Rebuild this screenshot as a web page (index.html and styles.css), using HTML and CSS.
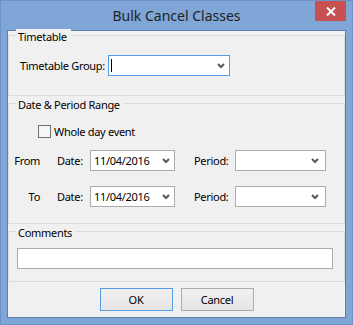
FILE: index.html
```html
<!DOCTYPE html>
<html>
<head>
<meta charset="utf-8">
<link rel="stylesheet" href="styles.css">
</head>
<body>
<div class="window">
  <div class="titlebar">
    <div class="title">Bulk Cancel Classes</div>
    <div class="close"><svg width="10" height="9" viewBox="0 0 10 9"><path d="M1 0.5 L9 8.5 M9 0.5 L1 8.5" stroke="#fff" stroke-width="2" fill="none"/></svg></div>
  </div>
  <div class="client">
    <div class="group g-timetable">
      <div class="legend">Timetable</div>
      <div class="row tt-row">
        <span class="tt-lbl">Timetable Group:</span>
        <div class="combo focus tt-combo"><span class="caret"></span><svg class="chev" width="8" height="6" viewBox="0 0 8 6"><path d="M1 1 L4 4 L7 1" stroke="#5a5a5a" stroke-width="2" fill="none"/></svg></div>
      </div>
    </div>
    <div class="group g-date">
      <div class="legend">Date &amp; Period Range</div>
      <div class="row chk-row"><span class="checkbox"></span><span class="chk-text">Whole day event</span></div>
      <div class="row range-row from-row">
        <span class="rlabel">From</span>
        <span class="dlabel">Date:</span>
        <div class="combo date-combo"><span class="val">11/04/2016</span><svg class="chev" width="8" height="6" viewBox="0 0 8 6"><path d="M1 1 L4 4 L7 1" stroke="#5a5a5a" stroke-width="2" fill="none"/></svg></div>
        <span class="plabel">Period:</span>
        <div class="combo period-combo"><span class="val"></span><svg class="chev" width="8" height="6" viewBox="0 0 8 6"><path d="M1 1 L4 4 L7 1" stroke="#5a5a5a" stroke-width="2" fill="none"/></svg></div>
      </div>
      <div class="row range-row to-row">
        <span class="rlabel">To</span>
        <span class="dlabel">Date:</span>
        <div class="combo date-combo"><span class="val">11/04/2016</span><svg class="chev" width="8" height="6" viewBox="0 0 8 6"><path d="M1 1 L4 4 L7 1" stroke="#5a5a5a" stroke-width="2" fill="none"/></svg></div>
        <span class="plabel">Period:</span>
        <div class="combo period-combo"><span class="val"></span><svg class="chev" width="8" height="6" viewBox="0 0 8 6"><path d="M1 1 L4 4 L7 1" stroke="#5a5a5a" stroke-width="2" fill="none"/></svg></div>
      </div>
    </div>
    <div class="group g-comments">
      <div class="legend">Comments</div>
      <div class="textbox"></div>
    </div>
    <div class="buttons">
      <div class="btn default">OK</div>
      <div class="btn">Cancel</div>
    </div>
  </div>
</div>
</body>
</html>
```
FILE: styles.css
```css
* { box-sizing: border-box; }
html, body { margin: 0; padding: 0; background: #7fa6d6; }
body {
  font-family: "Noto Sans", "Open Sans", sans-serif;
  font-size: 11px;
  letter-spacing: -0.3px;
  color: #000;
}
.window {
  width: 353px;
  height: 325px;
  background: #7fa6d6;
  border: 1px solid #6d93c6;
  display: flex;
  flex-direction: column;
}
.titlebar {
  height: 29px;
  flex: none;
  display: grid;
  grid-template-columns: 1fr auto 1fr;
  align-items: start;
}
.title {
  grid-column: 2;
  font-size: 14px;
  letter-spacing: 0;
  line-height: 20px;
  padding-top: 5px;
  color: #222;
  white-space: nowrap;
}
.close {
  grid-column: 3;
  justify-self: end;
  margin-right: 6px;
  width: 31px;
  height: 20px;
  background: #c75050;
  display: flex;
  align-items: center;
  justify-content: center;
}
.close svg { display: block; }
.client {
  flex: none;
  margin: 0 6px;
  height: 288px;
  border: 1px solid #5c7fb0;
  background: #f0f0f0;
}
.group {
  border: 1px solid #dcdcdc;
}
.legend {
  width: fit-content;
  margin: -7px 0 0 7px;
  padding: 0 4px 0 2px;
  line-height: 15px;
  background: #f0f0f0;
}
.g-timetable { margin-top: 4px; height: 61px; }
.g-date { margin-top: 7px; height: 121px; }
.g-comments { margin-top: 7px; height: 51px; }
.row { display: flex; align-items: center; }
.tt-row { margin-top: 11px; padding-left: 11px; height: 21px; }
.tt-lbl { width: 88px; white-space: nowrap; }
.combo {
  height: 21px;
  border: 1px solid #acacac;
  background: #fff;
  display: flex;
  align-items: center;
  justify-content: space-between;
  padding: 0 4px 0 3px;
}
.combo.focus { border-color: #569de5; }
.chev { display: block; flex: none; }
.tt-combo { width: 122px; padding-left: 2px; }
.caret { width: 1px; height: 13px; background: #000; }
.chk-row { margin-top: 13px; padding-left: 29px; height: 13px; }
.checkbox {
  width: 13px;
  height: 13px;
  border: 1px solid #707070;
  background: #f6f6f6;
  flex: none;
}
.chk-text { margin-left: 3px; white-space: nowrap; }
.range-row { height: 21px; }
.from-row { margin-top: 12px; }
.to-row { margin-top: 15px; }
.rlabel { width: 31px; text-align: right; flex: none; }
.dlabel { margin-left: 17px; width: 33px; flex: none; }
.date-combo { width: 85px; flex: none; }
.plabel { margin-left: 19px; width: 41px; flex: none; }
.period-combo { width: 91px; flex: none; padding-right: 6px; }
.textbox {
  margin: 8px 0 0 8px;
  width: 316px;
  height: 21px;
  border: 1px solid #acacac;
  background: #fff;
}
.buttons {
  margin-top: 6px;
  display: flex;
  justify-content: center;
  gap: 8px;
}
.btn {
  width: 73px;
  height: 23px;
  border: 1px solid #acacac;
  background: linear-gradient(#f0f0f0, #e5e5e5);
  display: flex;
  align-items: center;
  justify-content: center;
  line-height: 15px;
}
.btn.default { border-color: #569de5; }
```
